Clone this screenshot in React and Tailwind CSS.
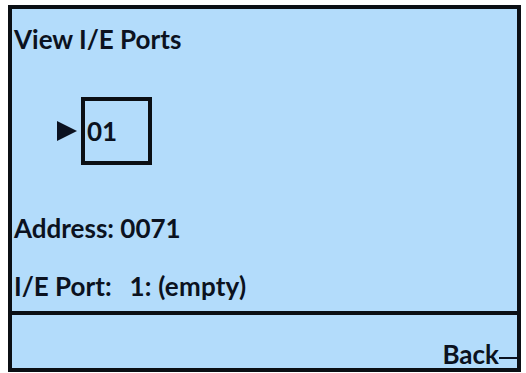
export default function App() {
  return (
    <div
      className="ml-[8px] mt-[5px] flex h-[367px] w-[513px] flex-col border-4 border-[#0b0f14] bg-[#b3dcfb] text-[26px] font-bold text-[#0b1220]"
      style={{ fontFamily: 'Lato, "Open Sans", sans-serif' }}
    >
      {/* main screen */}
      <div className="flex h-[306px] flex-col border-b-4 border-[#0b0f14] pl-[2px]">
        <div className="mt-[17px] h-[26px] leading-[26px]">View I/E Ports</div>

        <div className="mt-[45px] flex items-center">
          <svg className="ml-[43px] h-[20px] w-[20px]" viewBox="0 0 20 20">
            <path d="M0 0 L20 10 L0 20 Z" fill="#0b1220" />
          </svg>
          <div className="ml-[4px] flex h-[68px] w-[71px] items-center border-4 border-[#0b0f14] pl-[2px]">
            <span className="leading-[26px]">01</span>
          </div>
        </div>

        <div className="mt-[50px] h-[26px] leading-[26px]">Address: 0071</div>
        <div className="mt-[32px] flex h-[26px] leading-[26px]">
          <span>I/E Port:</span>
          <span className="ml-[18px] tracking-[0.2px]">1: (empty)</span>
        </div>
      </div>

      {/* soft key bar */}
      <div className="flex flex-1 items-start justify-end pt-[26px]">
        <span className="h-[26px] leading-[26px]">Back</span>
        <span className="mt-[16px] h-[2px] w-[18px] bg-[#0b1220]" />
      </div>
    </div>
  );
}
